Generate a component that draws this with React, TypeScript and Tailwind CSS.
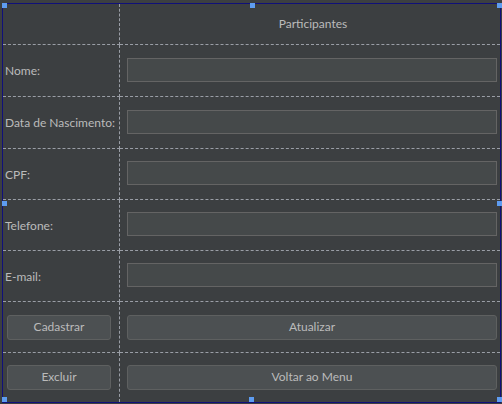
import React from "react";

const fields = ["Nome:", "Data de Nascimento:", "CPF:", "Telefone:", "E-mail:"];

const handles = [
  "left-[2px] top-[3px]",
  "left-[250px] top-[3px]",
  "left-[497px] top-[3px]",
  "left-[2px] top-[201px]",
  "left-[497px] top-[201px]",
  "left-[2px] top-[397px]",
  "left-[249px] top-[397px]",
  "left-[497px] top-[397px]",
];

export default function App() {
  const rowLine = "border-b border-dashed border-[#9a9ea6]";
  const colLine = "border-r border-dashed border-[#9a9ea6]";

  return (
    <div
      className="relative w-[502px] h-[404px] bg-[#3c3f41] pt-[3px] pl-[2px] text-[12px] text-[#bbbbbb]"
      style={{ fontFamily: 'Lato, "Noto Sans", sans-serif' }}
    >
      <div className="w-[499px] h-[400px] border border-[#10107a] grid grid-cols-[117px_1fr] grid-rows-[41px_52px_52px_51px_51px_51px_51px_1fr]">
        {/* header */}
        <div className={`${rowLine} ${colLine}`} />
        <div className={`${rowLine} flex items-center justify-center pl-[6px]`}>
          Participantes
        </div>

        {fields.map((label) => (
          <React.Fragment key={label}>
            <div className={`${rowLine} ${colLine} flex items-center pl-[2px] pt-[1px] whitespace-nowrap`}>
              {label}
            </div>
            <div className={`${rowLine} flex items-center pl-[7px] pr-[3px] pb-[2px]`}>
              <div className="h-[24px] w-full bg-[#45494a] border border-[#646464]" />
            </div>
          </React.Fragment>
        ))}

        {/* buttons */}
        <div className={`${rowLine} ${colLine} flex items-center pl-[4px] pr-[8px]`}>
          <button className="h-[25px] w-full rounded-[3px] bg-[#4c5052] border border-[#5e6060]">
            Cadastrar
          </button>
        </div>
        <div className={`${rowLine} flex items-center pl-[7px] pr-[3px]`}>
          <button className="h-[25px] w-full rounded-[3px] bg-[#4c5052] border border-[#5e6060]">
            Atualizar
          </button>
        </div>
        <div className={`${colLine} flex items-center pl-[4px] pr-[8px] pb-[1px]`}>
          <button className="h-[25px] w-full rounded-[3px] bg-[#4c5052] border border-[#5e6060]">
            Excluir
          </button>
        </div>
        <div className="flex items-center pl-[7px] pr-[3px] pb-[1px]">
          <button className="h-[25px] w-full rounded-[3px] bg-[#4c5052] border border-[#5e6060]">
            Voltar ao Menu
          </button>
        </div>
      </div>

      {handles.map((pos) => (
        <div key={pos} className={`absolute ${pos} w-[5px] h-[5px] bg-[#5e9cf0]`} />
      ))}
    </div>
  );
}
